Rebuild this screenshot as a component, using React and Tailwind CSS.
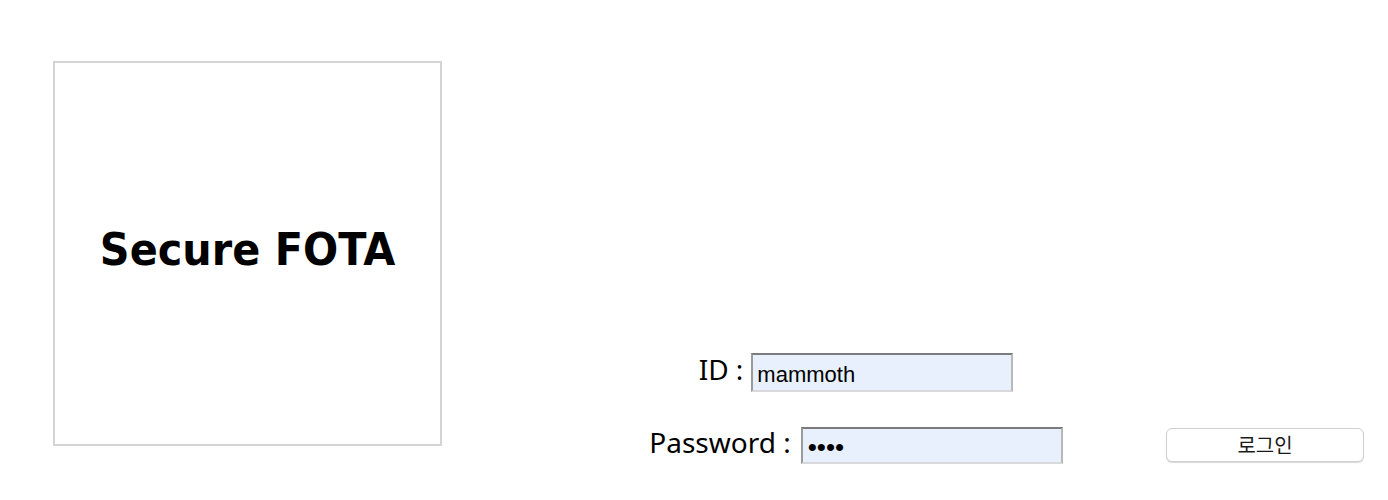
export default function App() {
  return (
    <div className="w-[1388px] h-[500px] bg-white flex items-start">
      <div className="ml-[53px] mt-[61px] w-[389px] h-[385px] border-2 border-[#d4d4d4] flex items-center justify-center">
        <span className="font-['DejaVu_Sans',sans-serif] font-bold text-[45px] text-black scale-x-[0.92] mt-[-8px]">
          Secure FOTA
        </span>
      </div>

      <div className="ml-[159px] mt-[353px] w-[510px] flex flex-col items-center gap-[35px] font-['Noto_Sans','Liberation_Sans',sans-serif] text-[28px] text-black">
        <div className="flex items-center gap-[8px]">
          <span className="leading-none mt-[-8px]">ID :</span>
          <input
            type="text"
            defaultValue="mammoth"
            readOnly
            className="w-[262px] h-[39px] bg-[#e8f0fe] border-2 border-t-[#7b7b7b] border-l-[#9a9a9a] border-r-[#b8b8b8] border-b-[#d9d9d9] px-[4px] pt-[5px] font-['Liberation_Sans',sans-serif] text-[22px] text-black outline-none"
          />
        </div>
        <div className="flex items-center gap-[10px]">
          <span className="leading-none mt-[-8px]">Password :</span>
          <input
            type="password"
            defaultValue="abcd"
            readOnly
            className="w-[262px] h-[37px] bg-[#e8f0fe] border-2 border-t-[#7b7b7b] border-l-[#9a9a9a] border-r-[#b8b8b8] border-b-[#d9d9d9] px-[5px] pt-[4px] font-['Liberation_Sans',sans-serif] text-[26px] text-black outline-none"
          />
        </div>
      </div>

      <button className="mt-[428px] ml-[55px] w-[198px] h-[34px] bg-white border border-[#cfcfcf] rounded-[6px] shadow-[0_1px_1px_rgba(0,0,0,0.15)] font-['Noto_Sans_CJK_KR',sans-serif] text-[20px] text-[#1a1a1a] flex items-center justify-center">
        로그인
      </button>
    </div>
  );
}
